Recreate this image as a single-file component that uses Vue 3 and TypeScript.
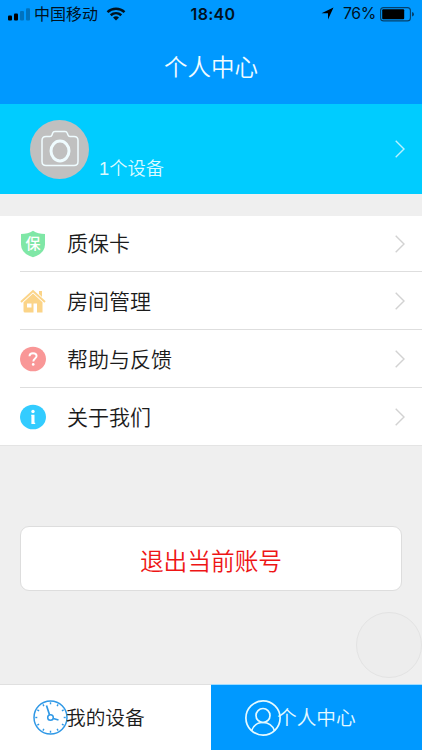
<script setup lang="ts">
type IconName = 'shield' | 'house' | 'help' | 'info'

interface MenuItem {
  label: string
  icon: IconName
}

const items: MenuItem[] = [
  { label: '质保卡', icon: 'shield' },
  { label: '房间管理', icon: 'house' },
  { label: '帮助与反馈', icon: 'help' },
  { label: '关于我们', icon: 'info' },
]

const ticks: number[] = Array.from({ length: 12 }, (_, i) => i * 30)
</script>

<template>
  <div class="screen">
    <header class="top">
      <div class="status">
        <div class="carrier">
          <svg class="signal" width="22" height="13" viewBox="0 0 22 13">
            <rect x="0" y="7.5" width="4" height="5" rx="1" />
            <rect x="6" y="5.5" width="4" height="7" rx="1" />
            <rect x="12" y="3" width="4" height="9.5" rx="1" opacity=".25" />
            <rect x="18" y="0.3" width="4" height="12.2" rx="1" opacity=".25" />
          </svg>
          <span class="operator">中国移动</span>
          <svg class="wifi" width="20" height="14" viewBox="0 0 20 14">
            <path d="M1.5 5.2C6.3 .7 13.7 .7 18.5 5.2" />
            <path d="M4.7 8.3C7.8 5.5 12.2 5.5 15.3 8.3" />
            <path class="dot" d="M7 10.5Q10 8.2 13 10.5L10 13.5Z" />
          </svg>
        </div>
        <span class="clock">18:40</span>
        <div class="power">
          <svg class="arrow" width="13" height="13" viewBox="0 0 13 13">
            <path d="M12.5 .5L7 12.5V6.2H.5Z" />
          </svg>
          <span class="percent">76%</span>
          <svg width="35" height="15" viewBox="0 0 35 15">
            <rect x=".6" y=".6" width="29.8" height="13.3" rx="3" fill="none" stroke="#05416c" stroke-width="1.1" />
            <rect x="2.2" y="2.2" width="22" height="10.1" rx="1" />
            <path d="M32 5Q34 5.5 34 7.3Q34 9 32 9.6Z" fill="#05416c" />
          </svg>
        </div>
      </div>
      <h1 class="title">个人中心</h1>
    </header>

    <section class="profile">
      <div class="avatar">
        <svg width="38" height="38" viewBox="0 0 38 38">
          <path d="M5 7.5H9Q10.5 7.5 11 6L11.7 4Q12.2 2.5 14 2.5H24Q25.7 2.5 26.2 4L27 6Q27.5 7.5 29 7.5H33Q37 7.5 37 11.5V32.5Q37 36.5 33 36.5H5Q1 36.5 1 32.5V11.5Q1 7.5 5 7.5Z" stroke-width="1.5" />
          <ellipse cx="19" cy="22" rx="9" ry="10" stroke-width="3" />
        </svg>
      </div>
      <span class="count">1个设备</span>
      <svg class="chevron" width="10" height="18" viewBox="0 0 10 18"><path d="M.7 .8L9 9L.7 17.2" /></svg>
    </section>

    <ul class="menu">
      <li v-for="item in items" :key="item.label" class="row">
        <span class="icon">
          <svg v-if="item.icon === 'shield'" width="26" height="28" viewBox="0 0 26 28">
            <path d="M13 .7Q18 4 25 4V14.5Q25 23.5 13 27.3Q1 23.5 1 14.5V4Q8 4 13 .7Z" fill="#7fe7a6" />
            <text x="13" y="19.3" text-anchor="middle" class="badge">保</text>
          </svg>
          <svg v-else-if="item.icon === 'house'" width="26" height="24" viewBox="0 0 26 24">
            <path d="M1 13L13 2L25 13" fill="none" stroke="#fbd488" stroke-width="2" />
            <path d="M19 2H22V8L19 5Z" fill="#fbd488" />
            <path fill-rule="evenodd" d="M3.5 13.3L13 4.5L22.5 13.3V23.5H17V14.5H13.5V23.5H5Q3.5 23.5 3.5 22ZM7 14.5V18.5H11.5V14.5Z" fill="#fbd488" />
          </svg>
          <svg v-else-if="item.icon === 'help'" width="26" height="26" viewBox="0 0 26 26">
            <ellipse cx="13" cy="13" rx="13" ry="12.3" fill="#f99797" />
            <path d="M9.5 10.2C9.5 8.3 11 7.2 13 7.2C15.1 7.2 16.6 8.3 16.6 10.1C16.6 12.5 13.3 12.6 13.3 15.5" fill="none" stroke="#fff" stroke-width="1.9" />
            <circle cx="13.2" cy="18.4" r="1.35" fill="#fff" />
          </svg>
          <svg v-else width="26" height="26" viewBox="0 0 26 26">
            <ellipse cx="13" cy="13" rx="13" ry="12.3" fill="#33ccff" />
            <circle cx="13" cy="7.5" r="1.7" fill="#fff" />
            <path d="M11.2 10.8H14.5V18.7H15.2V20H11.4V12H11.2Z" fill="#fff" />
          </svg>
        </span>
        <span class="label">{{ item.label }}</span>
        <svg class="chevron grey" width="10" height="18" viewBox="0 0 10 18"><path d="M.7 .8L9 9L.7 17.2" /></svg>
      </li>
    </ul>

    <div class="body">
      <button class="logout" type="button">退出当前账号</button>
    </div>

    <nav class="tabs">
      <div class="tab devices">
        <svg width="35" height="35" viewBox="0 0 35 35" fill="none" stroke="#2f98e6">
          <circle cx="17.5" cy="17.5" r="16.5" stroke-width="1.5" />
          <path v-for="a in ticks" :key="a" d="M17.5 2.3V4.3" stroke-width="1.4" :transform="`rotate(${a} 17.5 17.5)`" />
          <circle cx="17.5" cy="17.5" r="2.8" stroke-width="1.5" />
          <path d="M16.5 14.7L13.5 5.5M20.3 18.5L25.5 20" stroke-width="1.7" />
        </svg>
        <span>我的设备</span>
      </div>
      <div class="tab personal">
        <svg width="36" height="36" viewBox="0 0 36 36" fill="none" stroke="#e5faff" stroke-width="1.7">
          <circle cx="18" cy="18" r="17.1" />
          <circle cx="18" cy="15.5" r="7" />
          <path d="M6.5 30.7C8.5 25.5 12.5 22.5 18 22.5C23.5 22.5 27.5 25.5 29.5 30.7" />
        </svg>
        <span>个人中心</span>
      </div>
    </nav>
    <div class="assistive"></div>
  </div>
</template>

<style>
body {
  margin: 0;
}
</style>

<style scoped>
.screen {
  position: relative;
  display: flex;
  flex-direction: column;
  width: 422px;
  height: 750px;
  overflow: hidden;
  background: #efefef;
  color: #1b1b1b;
  font-family: "Noto Sans CJK SC", sans-serif;
  font-weight: 350;
}
svg {
  display: block;
  flex: none;
}
.top {
  height: 104px;
  background: #0099ff;
}
.status {
  display: grid;
  grid-template-columns: 1fr auto 1fr;
  align-items: center;
  height: 28px;
  padding: 0 7px 0 8px;
  color: #00121f;
}
.carrier,
.power {
  display: flex;
  align-items: center;
}
.operator {
  margin-left: 4px;
  padding-bottom: 2px;
  font-size: 16px;
  font-weight: 400;
  line-height: 26px;
}
.wifi {
  margin-left: 8px;
  fill: none;
  stroke: #00121f;
  stroke-width: 2.5;
}
.wifi .dot {
  fill: #00121f;
  stroke: none;
}
.clock {
  padding-left: 3px;
  font: 600 16px/28px Inter, sans-serif;
  letter-spacing: 0.3px;
}
.power {
  justify-content: flex-end;
}
.arrow {
  margin-top: -1px;
}
.percent {
  margin: 0 4px 0 9px;
  font: 400 15.8px/28px Inter, sans-serif;
  letter-spacing: -0.3px;
}
.title {
  margin: 0;
  padding-top: 13px;
  color: #f2fcff;
  font-size: 23.5px;
  font-weight: 350;
  line-height: 50px;
  text-align: center;
}
.profile {
  display: flex;
  align-items: center;
  box-sizing: border-box;
  height: 90px;
  padding: 0 17px 0 30px;
  background: #00ccff;
}
.avatar {
  display: grid;
  place-items: center;
  width: 59px;
  height: 59px;
  border-radius: 50%;
  background: #c0c0c0;
}
.avatar svg {
  margin-top: -2px;
  fill: none;
  stroke: #effcff;
}
.count {
  margin: 39px auto 0 10px;
  color: #dcfaff;
  font-family: "Liberation Sans", "Noto Sans CJK SC", sans-serif;
  font-size: 18.3px;
  line-height: 24px;
}
.chevron {
  fill: none;
  stroke: #b7f1ff;
  stroke-width: 1.4;
}
.chevron.grey {
  margin-left: auto;
  stroke: #d2d2d2;
}
.menu {
  margin: 22px 0 0;
  padding: 0;
  border-bottom: 1px solid #e4e4e4;
  background: #fff;
  list-style: none;
}
.row {
  display: flex;
  align-items: center;
  box-sizing: border-box;
  height: 58px;
  margin-left: 20px;
  padding-right: 17px;
  border-bottom: 1px solid #dedede;
}
.row:first-child {
  height: 56px;
}
.row:last-child {
  height: 57px;
  border-bottom: 0;
}
.icon {
  display: grid;
  place-items: center;
  width: 27px;
}
.icon svg {
  margin-right: 1px;
}
.badge {
  fill: #fff;
  font-size: 15px;
  font-weight: 500;
}
.label {
  margin-left: 20px;
  padding-bottom: 2px;
  font-size: 21px;
  line-height: 30px;
}
.row:first-child .label {
  padding-bottom: 3px;
}
.body {
  flex: 1;
  padding: 80px 20px 0;
}
.logout {
  display: block;
  box-sizing: border-box;
  width: 382px;
  height: 65px;
  padding: 2px 0 0;
  border: 1px solid #dddddd;
  border-radius: 9px;
  background: #fff;
  color: #ee1515;
  font-family: inherit;
  font-size: 23.7px;
  font-weight: 350;
  line-height: 34px;
}
.tabs {
  display: flex;
  height: 66px;
}
.tab {
  display: flex;
  align-items: center;
  box-sizing: border-box;
  width: 211px;
  font-size: 19.7px;
  line-height: 30px;
}
.tab span {
  padding-bottom: 2px;
}
.devices {
  padding-left: 33px;
  border-top: 1px solid #e0e0e0;
  background: #fff;
}
.personal {
  padding-left: 34px;
  border-top: 1px solid #9fdcff;
  background: #0099ff;
  color: #e5faff;
}
.personal span {
  margin-left: -4px;
}
.devices span {
  margin-left: -2px;
}
.assistive {
  position: absolute;
  top: 612px;
  left: 356px;
  box-sizing: border-box;
  width: 66px;
  height: 66px;
  border: 1px solid #e3e3e3;
  border-radius: 50%;
  background: #ededed;
}
</style>
